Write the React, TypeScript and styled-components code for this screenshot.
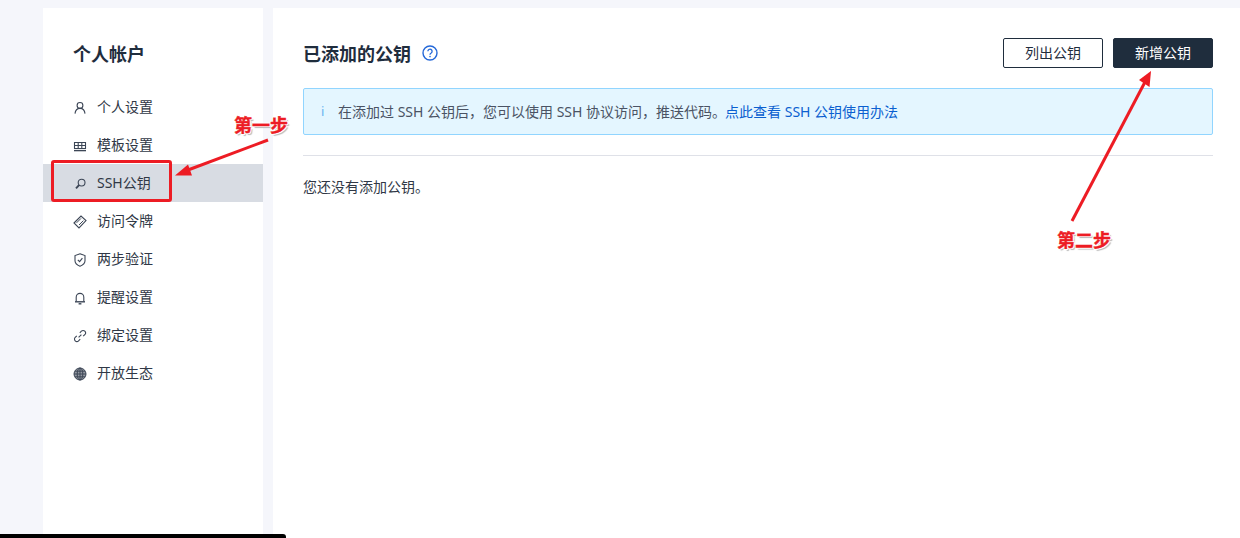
import styled, { createGlobalStyle } from "styled-components";

const GlobalStyle = createGlobalStyle`
    html, body {
        margin: 0;
        padding: 0;
        height: 538px;
        overflow: hidden;
        background: #F5F6FB;
        font-family: "Noto Sans", "Noto Sans CJK SC", sans-serif;
        color: #1F2D3D;
    }
`

const NAV_ITEMS = [
    { label: "个人设置", icon: "user" },
    { label: "模板设置", icon: "table" },
    { label: "SSH公钥", icon: "key" },
    { label: "访问令牌", icon: "ticket" },
    { label: "两步验证", icon: "shield" },
    { label: "提醒设置", icon: "bell" },
    { label: "绑定设置", icon: "link" },
    { label: "开放生态", icon: "globe" },
]

const NavIcon = (props: { name: string }) => {
    const common = { fill: "none", stroke: "#3C4656", strokeWidth: 1.1 }
    return (
        <svg width="14" height="14" viewBox="0 0 14 14">
            {props.name === "user" && (
                <g {...common}>
                    <circle cx="7" cy="4.4" r="2.9"/>
                    <path d="M2 12.6c.3-3 2.4-5.2 5-5.2s4.7 2.2 5 5.2"/>
                </g>
            )}
            {props.name === "table" && (
                <g {...common}>
                    <path d="M1.5 3.5h11v6h-11zM1.5 6.5h11M5.2 3.5v6M8.8 3.5v6"/>
                    <path d="M1 11.6h12" strokeWidth="1.4"/>
                </g>
            )}
            {props.name === "key" && (
                <g {...common}>
                    <circle cx="8.6" cy="5.6" r="3.4"/>
                    <path d="M6 8.2L3 11.4" strokeWidth="1.9"/>
                </g>
            )}
            {props.name === "ticket" && (
                <g {...common}>
                    <path d="M1 8L8 1l5 4.6L6 13z"/>
                    <path d="M3.6 7.8l4.4-4.4M6 10l4.4-4.4" strokeWidth="1"/>
                </g>
            )}
            {props.name === "shield" && (
                <g {...common}>
                    <path d="M7 .8l5 1.8v5.2c0 2.6-2.2 4.4-5 5.4-2.8-1-5-2.8-5-5.4V2.6z"/>
                    <path d="M4.8 6.8L6.6 8.6 9.4 5.2"/>
                </g>
            )}
            {props.name === "bell" && (
                <g {...common}>
                    <path d="M3.2 10.6V6.2a3.8 3.8 0 0 1 7.6 0v4.4"/>
                    <path d="M2 10.8h10" strokeWidth="1.4"/>
                    <path d="M5.6 12.8h2.8" strokeWidth="1.4"/>
                </g>
            )}
            {props.name === "link" && (
                <g {...common}>
                    <path d="M5.6 8.4l2.8-2.8"/>
                    <path d="M6.8 3.8l1.6-1.6a2.4 2.4 0 0 1 3.4 3.4L10.2 7.2"/>
                    <path d="M7.2 10.2l-1.6 1.6a2.4 2.4 0 0 1-3.4-3.4L3.8 6.8"/>
                </g>
            )}
            {props.name === "globe" && (
                <g {...common} strokeWidth="1">
                    <circle cx="7" cy="7" r="6" fill="#3C4656" fillOpacity="0.55"/>
                    <ellipse cx="7" cy="7" rx="2.8" ry="6"/>
                    <path d="M1 7h12M2 4.2h10M2 9.8h10M7 1v12"/>
                </g>
            )}
        </svg>
    )
}

const App = () => {
    return (
        <>
            <GlobalStyle/>
            <PageRoot>
                <SideBar>
                    <SideTitle>个人帐户</SideTitle>
                    <SideNav>
                        {NAV_ITEMS.map((item) => (
                            <SideNavItem key={item.label} $isActive={item.icon === "key"}>
                                <NavIconBox><NavIcon name={item.icon}/></NavIconBox>
                                {item.label}
                            </SideNavItem>
                        ))}
                    </SideNav>
                </SideBar>
                <MainArea>
                    <MainHead>
                        <MainTitle>已添加的公钥</MainTitle>
                        <HelpIcon width="16" height="16" viewBox="0 0 16 16">
                            <circle cx="8" cy="8" r="7" fill="none" stroke="#2468D8" strokeWidth="1.4"/>
                            <path d="M5.9 6.3a2.1 2.1 0 1 1 3.3 1.7c-.8.5-1.2 1-1.2 1.8" fill="none" stroke="#2468D8" strokeWidth="1.3"/>
                            <circle cx="8" cy="11.6" r=".8" fill="#2468D8"/>
                        </HelpIcon>
                        <HeadButtons>
                            <HeadButton $primary={false}>列出公钥</HeadButton>
                            <HeadButton $primary={true}>新增公钥</HeadButton>
                        </HeadButtons>
                    </MainHead>
                    <InfoAlert>
                        <InfoMark>i</InfoMark>
                        <span>在添加过 SSH 公钥后，您可以使用 SSH 协议访问，推送代码。</span>
                        <InfoLink>点此查看 SSH 公钥使用办法</InfoLink>
                    </InfoAlert>
                    <Divider/>
                    <EmptyText>您还没有添加公钥。</EmptyText>
                </MainArea>

                <Annotation width="1240" height="538" viewBox="0 0 1240 538">
                    <path d="M268 140L188 170" stroke="#ED1C24" strokeWidth="3" fill="none"/>
                    <path d="M175 175.5L188 164.5L192 175.5z" fill="#ED1C24"/>
                    <path d="M1072 221L1145 82" stroke="#ED1C24" strokeWidth="3" fill="none"/>
                    <path d="M1151 71L1149.5 87L1139 80z" fill="#ED1C24"/>
                </Annotation>
                <HighlightBox/>
                <StepLabelOne>第一步</StepLabelOne>
                <StepLabelTwo>第二步</StepLabelTwo>
                <BottomBar/>
            </PageRoot>
        </>
    )
}

export default App

const PageRoot = styled.div`
    position: relative;
    display: flex;
    gap: 10px;
    width: 1240px;
    height: 538px;
    padding: 8px 0 0 43px;
    box-sizing: border-box;
    overflow: hidden;
`

const SideBar = styled.div`
    width: 220px;
    background: #FFFFFF;
    flex-shrink: 0;
`

const SideTitle = styled.div`
    padding: 33px 0 0 30px;
    height: 47px;
    line-height: 26px;
    font-size: 18px;
    font-weight: 700;
    color: #1F2D3D;
`

const SideNav = styled.div`
    display: flex;
    flex-direction: column;
`

const SideNavItem = styled.div<{ $isActive: boolean }>`
    display: flex;
    align-items: center;
    height: 38px;
    box-sizing: border-box;
    padding: 0 0 2px 30px;
    font-size: 14px;
    color: #303846;
    background: ${(props) => props.$isActive ? "#D8DCE3" : "transparent"};
`

const NavIconBox = styled.span`
    display: flex;
    width: 24px;
    flex-shrink: 0;
    padding-top: 4px;
`

const MainArea = styled.div`
    flex: 1;
    background: #FFFFFF;
    padding: 30px 27px 0 30px;
`

const MainHead = styled.div`
    display: flex;
    align-items: center;
    height: 30px;
`

const MainTitle = styled.div`
    font-size: 18px;
    font-weight: 700;
    color: #1F2D3D;
`

const HelpIcon = styled.svg`
    margin-left: 11px;
`

const HeadButtons = styled.div`
    display: flex;
    gap: 10px;
    margin-left: auto;
`

const HeadButton = styled.button<{ $primary: boolean }>`
    width: 100px;
    height: 30px;
    padding: 0 0 3px;
    border: 1px solid #1F2D3D;
    border-radius: 2px;
    font-family: inherit;
    font-size: 14px;
    color: ${(props) => props.$primary ? "#FFFFFF" : "#1F2D3D"};
    background: ${(props) => props.$primary ? "#1F2D3D" : "#FFFFFF"};
`

const InfoAlert = styled.div`
    display: flex;
    align-items: center;
    height: 47px;
    box-sizing: border-box;
    margin-top: 20px;
    padding: 0 0 2px 17px;
    background: #E4F6FF;
    border: 1px solid #91D5FF;
    border-radius: 2px;
    font-size: 14px;
    color: #4A5364;
`

const InfoMark = styled.span`
    width: 17px;
    color: #69B3F0;
    font-size: 13px;
`

const InfoLink = styled.span`
    margin-left: -1px;
    color: #0B5FD0;
`

const Divider = styled.div`
    height: 1px;
    margin-top: 20px;
    background: #DFE1E8;
`

const EmptyText = styled.div`
    margin-top: 21px;
    font-size: 14px;
    line-height: 20px;
    color: #303846;
`

const Annotation = styled.svg`
    position: absolute;
    left: 0;
    top: 0;
    pointer-events: none;
`

const HighlightBox = styled.div`
    position: absolute;
    left: 51px;
    top: 160px;
    width: 121px;
    height: 42px;
    box-sizing: border-box;
    border: 3px solid #ED1C24;
    border-radius: 3px;
`

const StepLabel = styled.div`
    position: absolute;
    font-size: 18px;
    line-height: 22px;
    font-weight: 700;
    color: #ED1C24;
    -webkit-text-stroke: 0.4px #ED1C24;
    text-shadow: 1px 1px 0 #FFFFFF, -1px 1px 0 #FFFFFF, 1px -1px 0 #FFFFFF, -1px -1px 0 #FFFFFF, 2px 2px 1px #B8B8B8;
`

const StepLabelOne = styled(StepLabel)`
    left: 234px;
    top: 114px;
`

const StepLabelTwo = styled(StepLabel)`
    left: 1057px;
    top: 229px;
`

const BottomBar = styled.div`
    position: absolute;
    left: 0;
    bottom: 0;
    width: 286px;
    height: 4px;
    background: #000000;
    border-radius: 0 3px 0 0;
`
